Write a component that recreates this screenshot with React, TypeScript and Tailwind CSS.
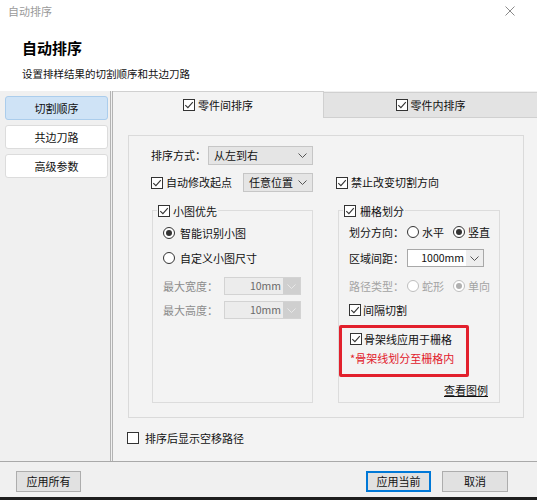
function Check({ on = true, dim = false }: { on?: boolean; dim?: boolean }) {
  const c = dim ? "#b5b5b5" : "#333333";
  return (
    <svg width="12" height="12" viewBox="0 0 12 12" className="shrink-0">
      <rect x="0.5" y="0.5" width="11" height="11" fill="#ffffff" stroke={c} />
      {on && <path d="M2.3 6.1 L4.9 8.7 L9.8 3.2" fill="none" stroke={c} strokeWidth="1.1" />}
    </svg>
  );
}

function Radio({ on = false, dim = false }: { on?: boolean; dim?: boolean }) {
  const c = dim ? "#bdbdbd" : "#333333";
  return (
    <svg width="12" height="12" viewBox="0 0 12 12" className="shrink-0">
      <circle cx="6" cy="6" r="5.5" fill="#ffffff" stroke={c} />
      {on && <circle cx="6" cy="6" r="3" fill={dim ? "#b0b0b0" : "#333333"} />}
    </svg>
  );
}

function Chevron({ color = "#555555" }: { color?: string }) {
  return (
    <svg width="9" height="5" viewBox="0 0 9 5" className="shrink-0">
      <polyline points="0.5,0.5 4.5,4.5 8.5,0.5" fill="none" stroke={color} />
    </svg>
  );
}

function DisabledSelect() {
  return (
    <div className="w-[77px] h-[18px] flex border border-[#d3d3d3] bg-[#ececec]">
      <div className="flex-1 flex items-center justify-end pr-[2px] text-[10.5px] text-[#6a6a6a]">10mm</div>
      <div className="w-[17px] flex items-center justify-center bg-[#cfcfcf]">
        <Chevron color="#e8e8e8" />
      </div>
    </div>
  );
}

function Btn({ label, primary = false, w }: { label: string; primary?: boolean; w: string }) {
  return (
    <div
      className={`${w} h-[21px] flex items-center justify-center bg-[#e1e1e1] border ${
        primary ? "border-[#0078d7] shadow-[inset_0_0_0_1px_#0078d7]" : "border-[#adadad]"
      }`}
    >
      {label}
    </div>
  );
}

const nav = ["切割顺序", "共边刀路", "高级参数"];

export default function App() {
  return (
    <div className="w-[537px] h-[500px] bg-[#f0f0f0] flex flex-col overflow-hidden text-[11px] text-[#111111] font-['Noto_Sans_CJK_SC',sans-serif]">
      {/* header */}
      <div className="h-[91px] bg-white flex flex-col shrink-0">
        <div className="h-[22px] flex items-center justify-between pl-[8px] pr-[22px] text-[#9a9a9a]">
          <span>自动排序</span>
          <svg width="10" height="10" viewBox="0 0 10 10">
            <path d="M0.5 0.5L9.5 9.5M9.5 0.5L0.5 9.5" stroke="#8a8a8a" />
          </svg>
        </div>
        <div className="mt-[16px] pl-[22px] text-[15px] font-bold leading-[20px] text-black">自动排序</div>
        <div className="mt-[9px] pl-[22px] text-[10.5px] leading-[14px]">设置排样结果的切割顺序和共边刀路</div>
      </div>

      {/* body */}
      <div className="h-[371px] flex border-b border-[#a9a9a9] shrink-0">
        <div className="w-[111px] border-r border-[#b3b3b3] flex flex-col gap-[5px] pt-[5px] pl-[5px] pr-[2px]">
          {nav.map((n, i) => (
            <div
              key={n}
              className={`h-[24px] rounded-[3px] border flex items-center justify-center ${
                i === 0 ? "bg-[#cfe3f6] border-[#abcdec]" : "bg-white border-[#dcdcdc]"
              }`}
            >
              {n}
            </div>
          ))}
        </div>
        <div className="w-[1px]" />
        <div className="flex-1 flex flex-col border-l border-[#b3b3b3]">
          {/* tabs */}
          <div className="h-[27px] flex shrink-0">
            <div className="w-[211px] border-t border-r border-[#d0d0d0] bg-[#f3f3f3] flex items-center justify-center gap-[3px]">
              <Check />
              <span>零件间排序</span>
            </div>
            <div className="flex-1 mt-[1px] border-t border-b border-[#d0d0d0] bg-[#e3e3e3] flex items-center justify-center gap-[3px]">
              <Check />
              <span>零件内排序</span>
            </div>
          </div>

          {/* panel */}
          <div className="flex-1 bg-[#f3f3f3] pt-[17px] flex flex-col">
            <div className="ml-[15px] w-[396px] border border-[#dadada] pt-[10px] pl-[22px] pb-[14px] flex">
              {/* left column */}
              <div className="w-[162px] flex flex-col">
                <div className="h-[19px] flex items-center justify-between">
                  <span>排序方式：</span>
                  <div className="w-[105px] h-[19px] flex items-center justify-between pl-[5px] pr-[5px] bg-[#e5e5e5] border border-[#c6c6c6]">
                    <span>从左到右</span>
                    <Chevron />
                  </div>
                </div>
                <div className="mt-[8px] h-[19px] flex items-center">
                  <Check />
                  <span className="ml-[3px]">自动修改起点</span>
                  <div className="ml-auto w-[70px] h-[19px] flex items-center justify-between pl-[5px] pr-[5px] bg-[#e5e5e5] border border-[#c6c6c6]">
                    <span>任意位置</span>
                    <Chevron />
                  </div>
                </div>
                <div className="relative mt-[18px] ml-[1px] w-[161px] h-[193px] border border-[#dcdcdc] pt-[14px] pl-[10px] flex flex-col">
                  <div className="absolute -top-[7px] left-[4px] h-[14px] px-[1px] bg-[#f3f3f3] flex items-center gap-[3px]">
                    <Check />
                    <span>小图优先</span>
                  </div>
                  <div className="h-[16px] flex items-center gap-[5px]">
                    <Radio on />
                    <span>智能识别小图</span>
                  </div>
                  <div className="mt-[9px] h-[16px] flex items-center gap-[5px]">
                    <Radio />
                    <span>自定义小图尺寸</span>
                  </div>
                  <div className="mt-[11px] h-[18px] flex items-center">
                    <span className="w-[61px] text-[#8c8c8c]">最大宽度：</span>
                    <DisabledSelect />
                  </div>
                  <div className="mt-[6px] h-[18px] flex items-center">
                    <span className="w-[61px] text-[#8c8c8c]">最大高度：</span>
                    <DisabledSelect />
                  </div>
                </div>
              </div>

              {/* right column */}
              <div className="ml-[23px] w-[164px] flex flex-col pt-[27px]">
                <div className="h-[19px] flex items-center">
                  <Check />
                  <span className="ml-[3px]">禁止改变切割方向</span>
                </div>
                <div className="relative mt-[18px] ml-[2px] w-[162px] h-[193px] border border-[#dcdcdc] pt-[13px] pl-[10px] flex flex-col">
                  <div className="absolute -top-[7px] left-[4px] h-[14px] px-[1px] bg-[#f3f3f3] flex items-center gap-[4px]">
                    <Check />
                    <span>栅格划分</span>
                  </div>
                  <div className="h-[16px] flex items-center">
                    <span className="w-[58px]">划分方向：</span>
                    <div className="w-[46px] flex items-center gap-[3px]">
                      <Radio />
                      <span>水平</span>
                    </div>
                    <div className="flex items-center gap-[3px]">
                      <Radio on />
                      <span>竖直</span>
                    </div>
                  </div>
                  <div className="mt-[9px] h-[18px] flex items-center">
                    <span className="w-[58px]">区域间距：</span>
                    <div className="w-[77px] h-[18px] flex border border-[#a8a8a8] bg-white">
                      <div className="flex-1 flex items-center justify-end pr-[2px] text-[10.5px]">1000mm</div>
                      <div className="w-[17px] flex items-center justify-center bg-[#eeeeee]">
                        <Chevron />
                      </div>
                    </div>
                  </div>
                  <div className="mt-[11px] h-[16px] flex items-center text-[#a3a3a3]">
                    <span className="w-[58px]">路径类型：</span>
                    <div className="w-[46px] flex items-center gap-[3px]">
                      <Radio dim />
                      <span>蛇形</span>
                    </div>
                    <div className="flex items-center gap-[3px]">
                      <Radio on dim />
                      <span>单向</span>
                    </div>
                  </div>
                  <div className="mt-[8px] h-[16px] flex items-center gap-[2px]">
                    <Check />
                    <span>间隔切割</span>
                  </div>
                  <div className="mt-[7px] -ml-[10px] w-[130px] h-[52px] border-[3px] border-[#e2202c] rounded-[2px] pt-[3px] pl-[8px] flex flex-col">
                    <div className="h-[16px] flex items-center gap-[2px]">
                      <Check />
                      <span>骨架线应用于栅格</span>
                    </div>
                    <div className="mt-[3px] h-[16px] flex items-center text-[#e2202c]">*骨架线划分至栅格内</div>
                  </div>
                  <div className="mt-[5px] h-[16px] self-end mr-[11px] flex items-center underline">查看图例</div>
                </div>
              </div>
            </div>

            <div className="ml-[14px] mt-[12px] h-[16px] flex items-center gap-[6px]">
              <Check on={false} />
              <span>排序后显示空移路径</span>
            </div>
          </div>
        </div>
      </div>

      {/* footer */}
      <div className="h-[35px] flex items-start pt-[9px] pl-[16px] pr-[29px] shrink-0">
        <Btn label="应用所有" w="w-[65px]" />
        <div className="flex-1" />
        <Btn label="应用当前" w="w-[65px]" primary />
        <div className="w-[11px]" />
        <Btn label="取消" w="w-[66px]" />
      </div>
      <div className="h-[3px] bg-[#1e1e1e] shrink-0" />
    </div>
  );
}
